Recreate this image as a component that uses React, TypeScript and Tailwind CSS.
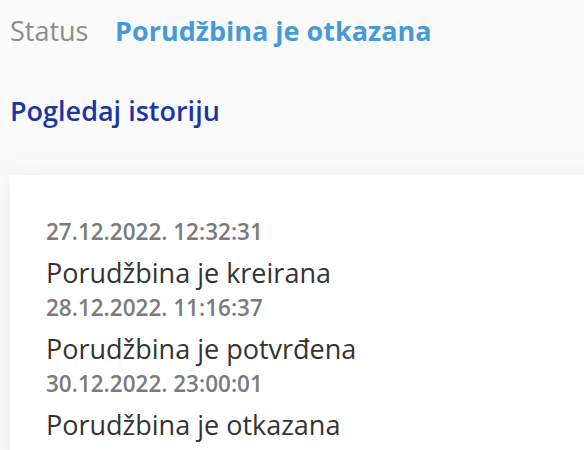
const history = [
  { date: "27.12.2022. 12:32:31", label: "Porudžbina je kreirana" },
  { date: "28.12.2022. 11:16:37", label: "Porudžbina je potvrđena" },
  { date: "30.12.2022. 23:00:01", label: "Porudžbina je otkazana" },
];

const Row = ({ label, value, className }: { label: string; value: string; className?: string }) => (
  <div className={"flex items-start leading-[36px] text-[27px] " + (className ?? "")}>
    <span className="w-[105px] shrink-0 text-[#8c8c8c]">{label}</span>
    <span className="font-bold text-[#479ad9]">{value}</span>
  </div>
);

export default function App() {
  return (
    <div
      className="h-[450px] w-[584px] overflow-hidden bg-[#fafafa]"
      style={{ fontFamily: '"Open Sans", "Noto Sans", sans-serif' }}
    >
      <div className="pl-[10px]">
        <Row label="Ukupno" value="" className="mt-[-35px]" />
        <Row label="Status" value="Porudžbina je otkazana" className="mt-[12px]" />

        <a href="#" className="mt-[44px] block text-[27px] font-semibold leading-[36px] text-[#1b36a3]">
          Pogledaj istoriju
        </a>
      </div>

      <div className="ml-[10px] mt-[46px] w-[620px] bg-white pb-8 pl-[36px] pt-[42px] shadow-[0_0_24px_rgba(0,0,0,0.06)]">
        <ul className="flex flex-col gap-[2px]">
          {history.map((h) => (
            <li key={h.date}>
              <div className="text-[22.5px] font-semibold leading-[30px] text-[#7b7b7b]">{h.date}</div>
              <div className="mt-2 text-[27px] leading-[36px] text-[#333333]">{h.label}</div>
            </li>
          ))}
        </ul>
      </div>
    </div>
  );
}
